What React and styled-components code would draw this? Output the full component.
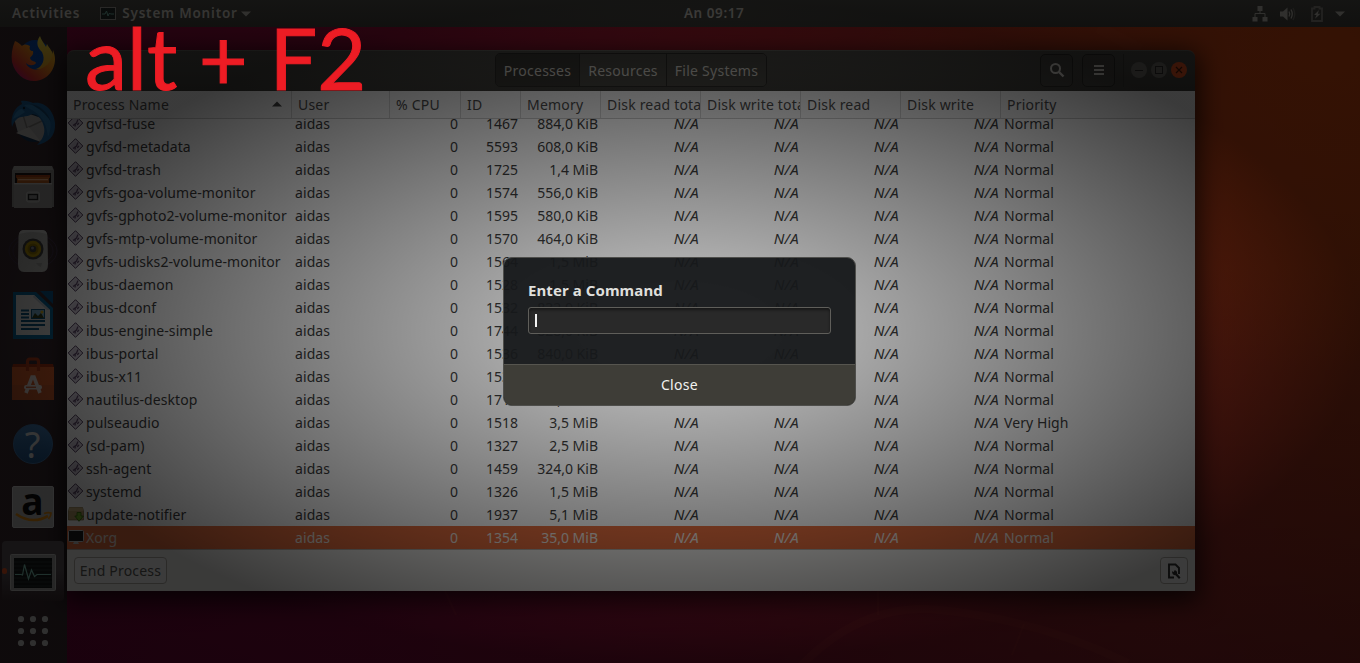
import React from "react";
import styled, { createGlobalStyle, css } from "styled-components";

const GlobalStyle = createGlobalStyle`
  * { box-sizing: border-box; }
  html, body { margin: 0; padding: 0; overflow: hidden; background: #000; }
  body { font-family: "Noto Sans", "Open Sans", sans-serif; font-size: 14px; letter-spacing: 0.08px; color: #333; }
`;

/* ---------- desktop ---------- */

const Desktop = styled.div`
  position: relative;
  width: 1360px;
  height: 663px;
  overflow: hidden;
  display: flex;
  flex-direction: column;
  background:
    radial-gradient(460px 320px at 1320px 50px, rgba(226, 78, 14, 0.8), rgba(226, 78, 14, 0) 100%),
    linear-gradient(to top, rgba(64, 0, 46, 0.45), rgba(64, 0, 46, 0) 60%),
    linear-gradient(90deg, #8c0a40 0, #a00e40 320px, #b0202c 760px, #c23c20 1180px, #bc4014 1360px);
`;

const WallpaperLines = styled.svg`
  position: absolute;
  inset: 0;
  width: 1360px;
  height: 663px;
`;

const Vignette = styled.div`
  position: absolute;
  inset: 0;
  background: radial-gradient(680px 331.5px at 50% 50%, rgba(0, 0, 0, 0.2), rgba(0, 0, 0, 0.76));
`;

const Annotation = styled.div`
  position: absolute;
  left: 85px;
  top: 7px;
  font-family: Lato, sans-serif;
  font-size: 86px;
  line-height: 100px;
  letter-spacing: 0;
  color: #ed1c24;
  -webkit-text-stroke: 1px #ed1c24;
  white-space: pre;
  transform-origin: 0 0;
  transform: scaleX(0.982);
`;

/* ---------- top panel ---------- */

const Panel = styled.header`
  position: relative;
  flex: none;
  height: 27px;
  display: grid;
  grid-template-columns: 672px auto 1fr;
  align-items: center;
  padding: 0 15px 0 12px;
  background: linear-gradient(#55544f, #45443f);
  color: #dfdbd2;
  font-size: 13.5px;
  font-weight: 600;
  letter-spacing: 0.8px;
  line-height: 27px;
`;

const PanelLeft = styled.div`
  display: flex;
  align-items: center;
  svg { display: block; }
`;

const AppMenu = styled.div`
  display: flex;
  align-items: center;
  gap: 6px;
  margin-left: 20px;
`;

const AppMenuArrow = styled.span`
  margin-left: -3px;
`;

const Clock = styled.span`
  letter-spacing: 0.55px;
`;

const PanelRight = styled.div`
  display: flex;
  justify-content: flex-end;
  align-items: center;
  svg { display: block; }
`;

const StatusIcon = styled.span`
  margin-right: ${(p) => p.$gap}px;
`;

/* ---------- dock ---------- */

const Body = styled.div`
  position: relative;
  flex: 1;
  display: flex;
  min-height: 0;
`;

const Dock = styled.nav`
  flex: none;
  width: 67px;
  display: flex;
  flex-direction: column;
  background: #3a2b30;
`;

const DockItem = styled.div`
  position: relative;
  height: ${(p) => p.$height || 64}px;
  padding: ${(p) => p.$shift || 0}px 2px 0 0;
  display: flex;
  align-items: center;
  justify-content: center;
  svg { display: block; }
  ${(p) =>
    p.$active &&
    css`
      &::before {
        content: "";
        position: absolute;
        inset: 2px 3px 2px 2px;
        border-radius: 4px;
        background: linear-gradient(#5a5257 50%, #3a2b30);
      }
      &::after {
        content: "";
        position: absolute;
        left: 2px;
        top: 29px;
        width: 5px;
        height: 6px;
        border-radius: 3px;
        background: #e95420;
      }
      svg { position: relative; }
    `}
`;

/* ---------- window ---------- */

const Window = styled.section`
  flex: none;
  width: 1128px;
  height: 541px;
  margin-top: 23px;
  display: flex;
  flex-direction: column;
  border-radius: 7px 7px 0 0;
  box-shadow: 0 6px 26px 4px rgba(0, 0, 0, 0.75);
`;

const TitleBar = styled.div`
  flex: none;
  height: 41px;
  display: grid;
  grid-template-columns: 428px auto 1fr;
  align-items: center;
  border-radius: 7px 7px 0 0;
  background: linear-gradient(#4e4d48, #3f3e3a);
  border-top: 1px solid #66655f;
  padding: 0 8px 2px 0;
`;

const TabGroup = styled.div`
  grid-column: 2;
  display: flex;
  height: 34px;
  border: 1px solid #2a2926;
  border-radius: 5px;
  overflow: hidden;
`;

const Tab = styled.div`
  width: ${(p) => p.$width}px;
  display: flex;
  align-items: center;
  justify-content: center;
  color: #d0cdc5;
  border-left: ${(p) => (p.$selected ? "0" : "1px solid #2a2926")};
  background: ${(p) => (p.$selected ? "#383733" : "#484742")};
  letter-spacing: 0.25px;
`;

const TitleActions = styled.div`
  grid-column: 3;
  justify-self: end;
  display: flex;
  align-items: center;
`;

const HeaderButton = styled.div`
  width: 33px;
  height: 33px;
  margin-right: ${(p) => p.$gap}px;
  display: flex;
  align-items: center;
  justify-content: center;
  border: 1px solid #2b2a27;
  border-radius: 5px;
  background: #454440;
`;

const WindowButtons = styled.div`
  display: flex;
  gap: 4px;
  padding-left: 7px;
  border-left: 1px solid #393834;
  height: 33px;
  align-items: center;
`;

const WindowButton = styled.div`
  width: 16px;
  height: 16px;
  border-radius: 50%;
  background: ${(p) => (p.$close ? "#e95420" : "#6f6e68")};
  svg { display: block; }
`;

const columns = "225px 98px 71px 60px 80px 100px 100px 100px 100px 194px";

const HeaderRow = styled.div`
  flex: none;
  display: grid;
  grid-template-columns: ${columns};
  height: 28px;
  background: #f4f4f4;
  border-bottom: 1px solid #c8c8c8;
`;

const HeaderCell = styled.div`
  display: flex;
  align-items: center;
  justify-content: space-between;
  padding: 0 0 0 6px;
  overflow: hidden;
  white-space: nowrap;
  color: #4c4c4c;
  letter-spacing: 0.2px;
  border-right: ${(p) => (p.$last ? "0" : "1px solid #d0d0d0")};
  svg { flex: none; margin: -2px 9px 0 0; }
`;

const Rows = styled.div`
  flex: 1;
  min-height: 0;
  display: flex;
  flex-direction: column;
  justify-content: flex-end;
  overflow: hidden;
  background: #fff;
`;

const Row = styled.div`
  flex: none;
  display: grid;
  grid-template-columns: ${columns};
  height: 23px;
  line-height: 23px;
  color: ${(p) => (p.$selected ? "#f4ece6" : "#3c3c3c")};
  background: ${(p) => (p.$selected ? "#ea7040" : "transparent")};
`;

const Cell = styled.div`
  white-space: nowrap;
  text-align: ${(p) => p.$align || "left"};
  padding: ${(p) => (p.$align === "right" ? "0 2px 0 0" : "0 0 0 3px")};
  ${(p) =>
    p.$align === "right" &&
    css`
      letter-spacing: 0;
      padding-right: 3px;
    `}
  ${(p) =>
    p.$italic &&
    css`
      font-style: italic;
      font-size: 15px;
      letter-spacing: 0.3px;
      padding-right: 2px;
    `}
`;

const NameCell = styled.div`
  display: flex;
  align-items: center;
  gap: 2px;
  padding-left: 1px;
  white-space: nowrap;
  svg { flex: none; display: block; margin-top: -2px; }
`;

const Footer = styled.div`
  flex: none;
  height: 42px;
  display: flex;
  align-items: center;
  justify-content: space-between;
  padding: 0 7px;
  background: #f2f1ee;
  border-top: 1px solid #b8b4ae;
`;

const FooterButton = styled.div`
  width: ${(p) => p.$width}px;
  height: 27px;
  display: flex;
  align-items: center;
  justify-content: center;
  border: 1px solid #b3afa8;
  border-radius: 4px;
  color: #5a5a58;
  background: #f7f6f5;
  letter-spacing: 0.2px;
  white-space: nowrap;
`;

/* ---------- run dialog ---------- */

const Dialog = styled.div`
  position: absolute;
  left: 503px;
  top: 257px;
  width: 353px;
  height: 149px;
  display: flex;
  flex-direction: column;
  border: 1px solid #4e4e4b;
  border-radius: 9px;
  overflow: hidden;
  background: rgba(22, 24, 26, 0.95);
`;

const DialogContent = styled.div`
  flex: 1;
  padding: 22px 24px 0;
`;

const DialogTitle = styled.div`
  height: 20px;
  line-height: 21px;
  font-size: 15px;
  font-weight: 700;
  color: #dfdfdc;
`;

const CommandEntry = styled.div`
  height: 27px;
  margin-top: 7px;
  display: flex;
  align-items: center;
  padding-left: 6px;
  border: 1px solid #5f5e5a;
  border-radius: 3px;
  background: #292929;
  box-shadow: inset 0 2px 3px rgba(0, 0, 0, 0.45);
`;

const Caret = styled.span`
  width: 2px;
  height: 13px;
  background: #f2f2f2;
`;

const DialogButton = styled.div`
  flex: none;
  height: 41px;
  display: flex;
  align-items: center;
  justify-content: center;
  padding-bottom: 2px;
  border-top: 1px solid #56554f;
  background: #3e3d37;
  color: #f2f2f0;
  letter-spacing: 0.3px;
`;

/* ---------- icons ---------- */

const Firefox = () => (
  <svg width="44" height="46" viewBox="0 0 44 46">
    <defs>
      <linearGradient id="ffOuter" x1="1" y1="0" x2="0.1" y2="0.9">
        <stop offset="0" stopColor="#ffe226" />
        <stop offset="0.45" stopColor="#f58a1a" />
        <stop offset="0.8" stopColor="#e0332e" />
        <stop offset="1" stopColor="#c0107e" />
      </linearGradient>
      <linearGradient id="ffTail" x1="0" y1="0" x2="0" y2="1">
        <stop offset="0" stopColor="#f5e446" />
        <stop offset="1" stopColor="#efa21e" />
      </linearGradient>
    </defs>
    <circle cx="24" cy="20" r="16" fill="#0a4cb0" />
    <path d="M29 0 C24 7 27 12 31 16 C35 24 31 31 25 33 C35 36 43 29 43 22 C42 15 38 12 36 8 L35 11 C33 7 30 4 29 0Z" fill="url(#ffTail)" />
    <path d="M4 5 C1 12 0 19 1 26 C4 38 13 45 23 45 C35 45 44 35 44 23 C44 20 43 17 42 14 C42 24 36 31 29 33 C22 35 16 31 15 27 C18 30 23 30 25 27 C25 25 20 26 19 22 C20 20 23 19 22 15 C19 15 18 13 19 10 C16 8 13 8 11 10 C9 8 7 6 4 5Z" fill="url(#ffOuter)" />
  </svg>
);

const Thunderbird = () => (
  <svg width="46" height="46" viewBox="0 0 46 46">
    <circle cx="24" cy="24" r="18" fill="#12304f" />
    <path d="M4 18 L14 12 L34 19 L40 28 L34 42 L8 33 Z" fill="#a9a8a6" />
    <path d="M13 15 L17 28 L34 20" fill="none" stroke="#7d7b79" strokeWidth="1.400" />
    <path d="M6 33 L19 27 L31 42" fill="#bab8b4" />
    <path d="M2 27 C0 16 5 7 12 4 L11 1 C16 0 20 2 23 3 C36 1 44 12 45 23 C46 36 38 43 27 45 C34 38 36 31 33 24 C31 18 27 14 22 14 C16 18 10 15 6 20 C4 22 3 24 2 27Z" fill="#1b5f98" />
    <path d="M14 5 C22 3 31 6 37 14 C41 20 42 27 38 37 C37 26 33 17 25 12 C21 9 17 8 14 5Z" fill="#2a76ac" />
    <path d="M20 4 C30 5 38 12 41 22 C36 14 29 8 20 4Z" fill="#16466f" />
    <path d="M3 19 C5 12 9 9 12 9 L15 12 L9 16Z" fill="#2f7db4" />
    <circle cx="14" cy="8" r="1.200" fill="#0c2236" />
  </svg>
);

const Files = () => (
  <svg width="42" height="44" viewBox="0 0 42 44">
    <path d="M2 1 H40 L42 5 V42 H0 V5Z" fill="#8f8e8b" />
    <path d="M2 1 H40 L41 5 H1Z" fill="#a9a8a5" />
    <rect x="3" y="8" width="36" height="10" fill="#1c1515" />
    <rect x="4" y="10" width="34" height="3" fill="#a33c10" />
    <rect x="5" y="12" width="32" height="6" fill="#b85a1c" />
    <rect x="6" y="14" width="30" height="1.300" fill="#f0b080" />
    <path d="M2 18 H40 V43 H2Z" fill="#999895" />
    <rect x="2" y="18" width="38" height="1.400" fill="#c3c2bf" />
    <rect x="14.500" y="27" width="13" height="10" rx="2" fill="#acaba8" stroke="#bcbbb8" />
    <rect x="16.500" y="29.500" width="9" height="5" fill="#909090" stroke="#222" strokeWidth="1.300" />
  </svg>
);

const Speaker = () => (
  <svg width="50" height="44" viewBox="0 0 50 44">
    <ellipse cx="25" cy="22" rx="24" ry="17" fill="none" stroke="#3e3046" strokeWidth="1" />
    <ellipse cx="25" cy="22" rx="20" ry="14" fill="none" stroke="#3e3046" strokeWidth="1" />
    <path d="M16 1 H34 Q39 1 39.500 7 L40 35 Q40 43 34 43 H16 Q10 43 10 35 L10.500 7 Q11 1 16 1Z" fill="#adada9" />
    <path d="M16 1 H34 Q38 1 39 5 Q25 1 11 5 Q12 1 16 1Z" fill="#c9c9c6" />
    <circle cx="25" cy="20" r="10.500" fill="#3e3e3e" />
    <circle cx="25" cy="20" r="8.200" fill="#b09008" />
    <circle cx="25" cy="20" r="5.500" fill="#8d7200" />
    <circle cx="25" cy="20" r="3.300" fill="#3a3a3a" />
    <circle cx="24.500" cy="19" r="1.500" fill="#888" />
    <path d="M28 34 H34 L33 38 Q30 37 28 34Z" fill="#959592" />
  </svg>
);

const Writer = () => (
  <svg width="40" height="48" viewBox="0 0 40 48">
    <path d="M0 1 H23 L40 17 V48 H0Z" fill="#07608f" />
    <path d="M27 0 H40 V13Z" fill="#084f80" />
    <path d="M3 4 H21 L37 19 V44 H3Z" fill="#d0d0ce" />
    <path d="M21 4 L37 19 H34 L20 6Z" fill="#a9b2b8" />
    <path d="M8 19.500H16M8 23H16M8 26.500H16M8 30H32M8 34H32M8 38H26" stroke="#0d4f75" strokeWidth="1.800" />
    <rect x="18.500" y="18.500" width="13" height="9" fill="#74a6c4" stroke="#0d4f75" />
    <path d="M19 27 L22 22 L25 25 L28 22 L31 27Z" fill="#303c1a" />
    <circle cx="29" cy="21" r="1.500" fill="#d0a818" />
  </svg>
);

const Software = () => (
  <svg width="42" height="44" viewBox="0 0 42 44">
    <path d="M1 7 H41 L42 11 H0Z" fill="#9c2f10" />
    <path d="M0 10 H42 V43 H0Z" fill="#cc5826" />
    <path d="M0 28 H42 V43 H0Z" fill="#bd5428" />
    <path d="M15.500 14 V5 Q15.500 2 18 2 H24 Q26.500 2 26.500 5 V14" fill="none" stroke="#a83816" strokeWidth="3.200" />
    <path d="M14 36 L20 20 H22 L28 36" fill="none" stroke="#d8ccc6" strokeWidth="3.600" />
    <rect x="12" y="28" width="18" height="4.500" rx="2.200" fill="#d8ccc6" />
    <rect x="14" y="29.600" width="10" height="1.300" fill="#bd5428" />
  </svg>
);

const HelpMark = styled.span`
  width: 40px;
  height: 40px;
  border-radius: 50%;
  border: 1px solid #3f73a8;
  background: linear-gradient(#4178ae, #1f5488);
  color: #dcdcdc;
  font: 36px/39px "Noto Sans", sans-serif;
  text-align: center;
`;

const AmazonMark = styled.span`
  position: relative;
  width: 42px;
  height: 42px;
  border-radius: 2px;
  background: #b4b4b2;
  border: 1px solid #ccc;
  color: #0c0c0c;
  font: 700 37px/27px "Open Sans", sans-serif;
  text-align: center;
  svg { position: absolute; left: 2px; bottom: 4px; }
`;

const Amazon = () => (
  <AmazonMark>
    a
    <svg width="38" height="12" viewBox="0 0 38 12">
      <path d="M1 3 Q17 14 33 5" fill="none" stroke="#e08a10" strokeWidth="2.600" />
      <path d="M29 2.500 Q33 1 36 2 Q36 5 33.500 8" fill="none" stroke="#e08a10" strokeWidth="1.800" />
    </svg>
  </AmazonMark>
);

const Monitor = () => (
  <svg width="46" height="38" viewBox="0 0 46 38">
    <rect x="0.500" y="0.500" width="45" height="36" rx="1" fill="#a0a09d" stroke="#c0c0bd" />
    <rect x="4" y="4" width="38" height="30" fill="#141918" />
    <path d="M4 8H42M4 12H42M4 16H42M4 20H42M4 24H42M4 28H42M4 32H42" stroke="#2e3b39" strokeWidth="0.800" />
    <path d="M5 20.500 H11 L12.500 21 L14.500 10.500 L18.500 25 L21.500 16 L24.500 22.500 L27 20.500 H41" fill="none" stroke="#82c8b8" strokeWidth="1.200" />
  </svg>
);

const AppGrid = () => (
  <svg width="32" height="34" viewBox="0 0 32 34" fill="#c6c6c4">
    {[4, 16, 28].map((y) => [4, 16, 28].map((x) => <circle key={`${x}-${y}`} cx={x} cy={y} r="3.100" />))}
  </svg>
);

const MiniMonitor = () => (
  <svg width="16" height="14" viewBox="0 0 16 14">
    <rect x="0.500" y="0.500" width="15" height="12" fill="#27302f" stroke="#aaa8a2" />
    <path d="M2 7 H5 L6.500 4 L8 9 L9.500 6 L10.500 7 H14" fill="none" stroke="#7cc2b4" strokeWidth="1" />
  </svg>
);

const CaretDown = () => (
  <svg width="10" height="6" viewBox="0 0 10 6">
    <path d="M0 0.500 H10 L5 5.500Z" fill="#c9c6be" />
  </svg>
);

const Network = () => (
  <svg width="16" height="16" viewBox="0 0 16 16" fill="#c9c6be">
    <path d="M5.500 0H10.500V5H5.500ZM0.500 11H5.500V15.500H0.500ZM10.500 11H15.500V15.500H10.500Z" />
    <path d="M8 5V8M3 11V7.500H13V11" fill="none" stroke="#c9c6be" />
  </svg>
);

const Volume = () => (
  <svg width="16" height="14" viewBox="0 0 16 14">
    <path d="M0 4.500H3L7.500 0.500V13.500L3 9.500H0Z" fill="#c9c6be" />
    <path d="M9 4.500Q10.500 7 9 9.500M11 2.500Q13.500 7 11 11.500" fill="none" stroke="#c9c6be" strokeWidth="1.300" />
    <path d="M13 1Q16.500 7 13 13" fill="none" stroke="#75736d" strokeWidth="1.300" />
  </svg>
);

const Battery = () => (
  <svg width="12" height="16" viewBox="0 0 12 16">
    <path d="M1 2.500H3.500V1H8.500V2.500H11V15H1Z" fill="none" stroke="#918e87" strokeWidth="1.800" />
    <path d="M8 4L3 9H5.500L4 12.800L9.500 7.800H6.800Z" fill="#c9c6be" />
  </svg>
);

const Search = () => (
  <svg width="16" height="16" viewBox="0 0 16 16" fill="none" stroke="#d8d5ce">
    <circle cx="6.500" cy="6.500" r="4.500" strokeWidth="2" />
    <path d="M10 10L14.500 14.500" strokeWidth="2.400" />
  </svg>
);

const Menu = () => (
  <svg width="12" height="12" viewBox="0 0 12 12">
    <path d="M1 2H11M1 6H11M1 10H11" stroke="#d8d5ce" strokeWidth="2" />
  </svg>
);

const ProcessIcon = () => (
  <svg width="16" height="16" viewBox="0 0 16 16">
    <path d="M7.500 0.700L14.800 8L7.500 15.300L0.200 8Z" fill="#cdc5d4" stroke="#4f3d5a" strokeWidth="1" />
    <path d="M7.500 2.300L13.200 8L7.500 13.700L1.800 8Z" fill="none" stroke="#e4dee8" strokeWidth="0.700" />
    <path d="M5 10.500L8.500 8L10 4.500M7 11.500L7.500 8.500M9.300 9.800L10.800 8" fill="none" stroke="#5f4a6a" strokeWidth="1.300" />
  </svg>
);

const PackageIcon = () => (
  <svg width="16" height="16" viewBox="0 0 16 16">
    <path d="M1.500 1.500H14.500L15.500 5V14H0.500V5Z" fill="#b79d69" stroke="#806a40" strokeWidth="0.700" />
    <path d="M1.500 1.500H14.500L15.500 5H0.500Z" fill="#cbb482" />
    <path d="M9 6.500H13V10H15.500L11 15.300L6.800 10H9Z" fill="#79b82c" stroke="#3c7410" strokeWidth="0.900" />
  </svg>
);

const DisplayIcon = () => (
  <svg width="16" height="16" viewBox="0 0 16 16">
    <rect x="0.500" y="1.500" width="15" height="11" rx="1" fill="#1d1d1f" stroke="#d0d0d0" />
    <path d="M6 13H10L11 15H5Z" fill="#c9c9c9" />
  </svg>
);

const PropertiesIcon = () => (
  <svg width="14" height="16" viewBox="0 0 14 16">
    <path d="M7 14.500H2V1.500H8.500L12 5V11" fill="none" stroke="#333" strokeWidth="1.900" />
    <path d="M5 8.200L6.800 9L7.500 7.200Q10.500 7.600 10 10.500L13.500 14.500L12 15.900L8.500 12.300Q5 12.300 5 8.200Z" fill="#333" />
  </svg>
);

const icons = { process: ProcessIcon, package: PackageIcon, display: DisplayIcon };

/* ---------- data ---------- */

const headers = [
  "Process Name", "User", "% CPU", "ID", "Memory",
  "Disk read total", "Disk write total", "Disk read", "Disk write", "Priority",
];

const processes = [
  { name: "gvfsd-fuse", id: 1467, memory: "884,0 KiB" },
  { name: "gvfsd-metadata", id: 5593, memory: "608,0 KiB" },
  { name: "gvfsd-trash", id: 1725, memory: "1,4 MiB" },
  { name: "gvfs-goa-volume-monitor", id: 1574, memory: "556,0 KiB" },
  { name: "gvfs-gphoto2-volume-monitor", id: 1595, memory: "580,0 KiB" },
  { name: "gvfs-mtp-volume-monitor", id: 1570, memory: "464,0 KiB" },
  { name: "gvfs-udisks2-volume-monitor", id: 1564, memory: "1,5 MiB" },
  { name: "ibus-daemon", id: 1528, memory: "1,5 MiB" },
  { name: "ibus-dconf", id: 1532, memory: "832,0 KiB" },
  { name: "ibus-engine-simple", id: 1744, memory: "828,0 KiB" },
  { name: "ibus-portal", id: 1536, memory: "840,0 KiB" },
  { name: "ibus-x11", id: 1534, memory: "2,0 MiB" },
  { name: "nautilus-desktop", id: 1717, memory: "9,5 MiB" },
  { name: "pulseaudio", id: 1518, memory: "3,5 MiB", priority: "Very High" },
  { name: "(sd-pam)", id: 1327, memory: "2,5 MiB" },
  { name: "ssh-agent", id: 1459, memory: "324,0 KiB" },
  { name: "systemd", id: 1326, memory: "1,5 MiB" },
  { name: "update-notifier", id: 1937, memory: "5,1 MiB", icon: "package" },
  { name: "Xorg", id: 1354, memory: "35,0 MiB", icon: "display", selected: true },
];

function ProcessRow({ process }) {
  const Icon = icons[process.icon || "process"];
  return (
    <Row $selected={process.selected}>
      <NameCell><Icon />{process.name}</NameCell>
      <Cell>aidas</Cell>
      <Cell $align="right">0</Cell>
      <Cell $align="right">{process.id}</Cell>
      <Cell $align="right">{process.memory}</Cell>
      <Cell $align="right" $italic>N/A</Cell>
      <Cell $align="right" $italic>N/A</Cell>
      <Cell $align="right" $italic>N/A</Cell>
      <Cell $align="right" $italic>N/A</Cell>
      <Cell>{process.priority || "Normal"}</Cell>
    </Row>
  );
}

export default function App() {
  return (
    <>
      <GlobalStyle />
      <Desktop>
        <WallpaperLines viewBox="0 0 1360 663" fill="none" stroke="#ff7050" strokeOpacity="0.08">
          <path d="M780 690 Q850 600 940 610 Q1040 620 1128 663" strokeWidth="8" />
          <path d="M1024 624L1012 655M440 580L456 615M878 590V615" strokeWidth="2" />
          <path d="M1098 27L1140 50" strokeWidth="12" />
        </WallpaperLines>
        <Panel>
          <PanelLeft>
            <span>Activities</span>
            <AppMenu>
              <MiniMonitor />
              <span>System Monitor</span>
              <AppMenuArrow><CaretDown /></AppMenuArrow>
            </AppMenu>
          </PanelLeft>
          <Clock>An 09:17</Clock>
          <PanelRight>
            <StatusIcon $gap={12}><Network /></StatusIcon>
            <StatusIcon $gap={15}><Volume /></StatusIcon>
            <StatusIcon $gap={12}><Battery /></StatusIcon>
            <CaretDown />
          </PanelRight>
        </Panel>
        <Body>
          <Dock>
            <DockItem><Firefox /></DockItem>
            <DockItem><Thunderbird /></DockItem>
            <DockItem><Files /></DockItem>
            <DockItem><Speaker /></DockItem>
            <DockItem><Writer /></DockItem>
            <DockItem><Software /></DockItem>
            <DockItem $shift={2}><HelpMark>?</HelpMark></DockItem>
            <DockItem><Amazon /></DockItem>
            <DockItem $active $shift={3}><Monitor /></DockItem>
            <DockItem $height={57}><AppGrid /></DockItem>
          </Dock>
          <Window>
            <TitleBar>
              <TabGroup>
                <Tab $width={83} $selected>Processes</Tab>
                <Tab $width={87}>Resources</Tab>
                <Tab $width={100}>File Systems</Tab>
              </TabGroup>
              <TitleActions>
                <HeaderButton $gap={9}><Search /></HeaderButton>
                <HeaderButton $gap={8}><Menu /></HeaderButton>
                <WindowButtons>
                  <WindowButton>
                    <svg width="16" height="16"><path d="M4 8.500H12" stroke="#2c2b28" /></svg>
                  </WindowButton>
                  <WindowButton>
                    <svg width="16" height="16"><rect x="4.500" y="4.500" width="7" height="7" fill="none" stroke="#2c2b28" /></svg>
                  </WindowButton>
                  <WindowButton $close>
                    <svg width="16" height="16"><path d="M5 5L11 11M11 5L5 11" stroke="#4a1a08" strokeWidth="1.200" /></svg>
                  </WindowButton>
                </WindowButtons>
              </TitleActions>
            </TitleBar>
            <HeaderRow>
              {headers.map((h, i) => (
                <HeaderCell key={h} $last={i === headers.length - 1}>
                  <span>{h}</span>
                  {i === 0 && <svg width="10" height="6"><path d="M0 5.500L5 0.500L10 5.500Z" fill="#444" /></svg>}
                </HeaderCell>
              ))}
            </HeaderRow>
            <Rows>
              {processes.map((p) => <ProcessRow key={p.name} process={p} />)}
            </Rows>
            <Footer>
              <FooterButton $width={93}>End Process</FooterButton>
              <FooterButton $width={28}><PropertiesIcon /></FooterButton>
            </Footer>
          </Window>
        </Body>
        <Vignette />
        <Dialog>
          <DialogContent>
            <DialogTitle>Enter a Command</DialogTitle>
            <CommandEntry><Caret /></CommandEntry>
          </DialogContent>
          <DialogButton>Close</DialogButton>
        </Dialog>
        <Annotation>alt + F2</Annotation>
      </Desktop>
    </>
  );
}
